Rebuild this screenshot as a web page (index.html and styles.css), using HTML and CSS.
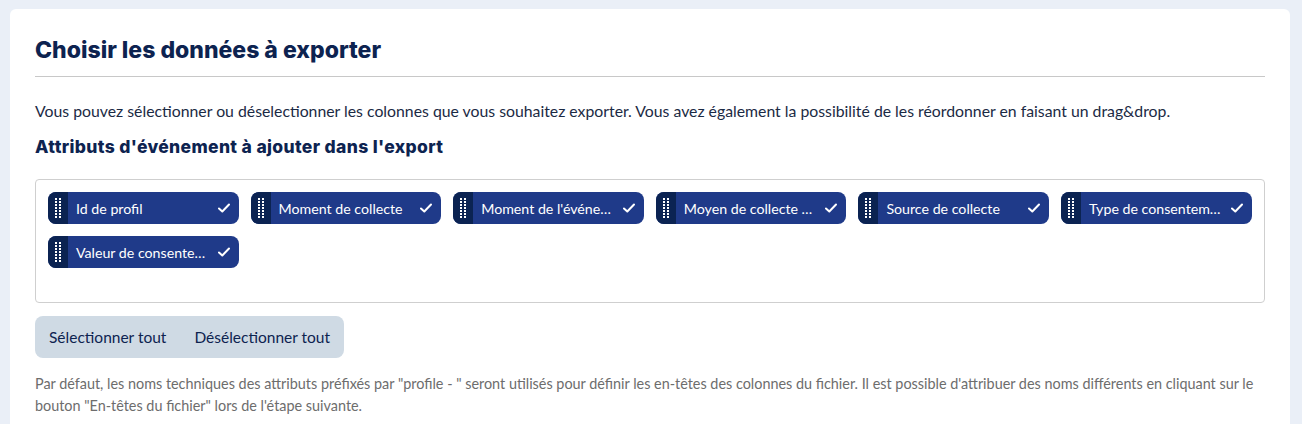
FILE: index.html
```html
<!DOCTYPE html>
<html lang="fr">
<head>
    <meta charset="UTF-8">
    <title>Choisir les données à exporter</title>
    <link rel="stylesheet" href="styles.css">
</head>
<body>
    <section class="card">
        <h2 class="title">Choisir les données à exporter</h2>
        <p class="intro">Vous pouvez sélectionner ou déselectionner les colonnes que vous souhaitez exporter. Vous avez également la possibilité de les réordonner en faisant un drag&amp;drop.</p>
        <h3 class="subtitle">Attributs d'événement à ajouter dans l'export</h3>

        <div class="chips">
            <div class="chip"><span class="grip"><svg viewBox="0 0 6 21" width="6" height="21"><g fill="#fff"><rect x="0" y="0" width="2" height="2"/><rect x="4" y="0" width="2" height="2"/><rect x="0" y="3" width="2" height="2"/><rect x="4" y="3" width="2" height="2"/><rect x="0" y="6" width="2" height="2"/><rect x="4" y="6" width="2" height="2"/><rect x="0" y="9" width="2" height="2"/><rect x="4" y="9" width="2" height="2"/><rect x="0" y="12" width="2" height="2"/><rect x="4" y="12" width="2" height="2"/><rect x="0" y="15" width="2" height="2"/><rect x="4" y="15" width="2" height="2"/><rect x="0" y="18" width="2" height="2"/><rect x="4" y="18" width="2" height="2"/></g></svg></span><span class="label">Id de profil</span><span class="check"><svg viewBox="0 0 12 10" width="12" height="10"><path d="M1 5.5 L4.3 8.5 L11 1.5" fill="none" stroke="#fff" stroke-width="2" stroke-linecap="round" stroke-linejoin="round"/></svg></span></div>
            <div class="chip"><span class="grip"><svg viewBox="0 0 6 21" width="6" height="21"><g fill="#fff"><rect x="0" y="0" width="2" height="2"/><rect x="4" y="0" width="2" height="2"/><rect x="0" y="3" width="2" height="2"/><rect x="4" y="3" width="2" height="2"/><rect x="0" y="6" width="2" height="2"/><rect x="4" y="6" width="2" height="2"/><rect x="0" y="9" width="2" height="2"/><rect x="4" y="9" width="2" height="2"/><rect x="0" y="12" width="2" height="2"/><rect x="4" y="12" width="2" height="2"/><rect x="0" y="15" width="2" height="2"/><rect x="4" y="15" width="2" height="2"/><rect x="0" y="18" width="2" height="2"/><rect x="4" y="18" width="2" height="2"/></g></svg></span><span class="label">Moment de collecte</span><span class="check"><svg viewBox="0 0 12 10" width="12" height="10"><path d="M1 5.5 L4.3 8.5 L11 1.5" fill="none" stroke="#fff" stroke-width="2" stroke-linecap="round" stroke-linejoin="round"/></svg></span></div>
            <div class="chip"><span class="grip"><svg viewBox="0 0 6 21" width="6" height="21"><g fill="#fff"><rect x="0" y="0" width="2" height="2"/><rect x="4" y="0" width="2" height="2"/><rect x="0" y="3" width="2" height="2"/><rect x="4" y="3" width="2" height="2"/><rect x="0" y="6" width="2" height="2"/><rect x="4" y="6" width="2" height="2"/><rect x="0" y="9" width="2" height="2"/><rect x="4" y="9" width="2" height="2"/><rect x="0" y="12" width="2" height="2"/><rect x="4" y="12" width="2" height="2"/><rect x="0" y="15" width="2" height="2"/><rect x="4" y="15" width="2" height="2"/><rect x="0" y="18" width="2" height="2"/><rect x="4" y="18" width="2" height="2"/></g></svg></span><span class="label">Moment de l'événement</span><span class="check"><svg viewBox="0 0 12 10" width="12" height="10"><path d="M1 5.5 L4.3 8.5 L11 1.5" fill="none" stroke="#fff" stroke-width="2" stroke-linecap="round" stroke-linejoin="round"/></svg></span></div>
            <div class="chip"><span class="grip"><svg viewBox="0 0 6 21" width="6" height="21"><g fill="#fff"><rect x="0" y="0" width="2" height="2"/><rect x="4" y="0" width="2" height="2"/><rect x="0" y="3" width="2" height="2"/><rect x="4" y="3" width="2" height="2"/><rect x="0" y="6" width="2" height="2"/><rect x="4" y="6" width="2" height="2"/><rect x="0" y="9" width="2" height="2"/><rect x="4" y="9" width="2" height="2"/><rect x="0" y="12" width="2" height="2"/><rect x="4" y="12" width="2" height="2"/><rect x="0" y="15" width="2" height="2"/><rect x="4" y="15" width="2" height="2"/><rect x="0" y="18" width="2" height="2"/><rect x="4" y="18" width="2" height="2"/></g></svg></span><span class="label">Moyen de collecte du consentement</span><span class="check"><svg viewBox="0 0 12 10" width="12" height="10"><path d="M1 5.5 L4.3 8.5 L11 1.5" fill="none" stroke="#fff" stroke-width="2" stroke-linecap="round" stroke-linejoin="round"/></svg></span></div>
            <div class="chip"><span class="grip"><svg viewBox="0 0 6 21" width="6" height="21"><g fill="#fff"><rect x="0" y="0" width="2" height="2"/><rect x="4" y="0" width="2" height="2"/><rect x="0" y="3" width="2" height="2"/><rect x="4" y="3" width="2" height="2"/><rect x="0" y="6" width="2" height="2"/><rect x="4" y="6" width="2" height="2"/><rect x="0" y="9" width="2" height="2"/><rect x="4" y="9" width="2" height="2"/><rect x="0" y="12" width="2" height="2"/><rect x="4" y="12" width="2" height="2"/><rect x="0" y="15" width="2" height="2"/><rect x="4" y="15" width="2" height="2"/><rect x="0" y="18" width="2" height="2"/><rect x="4" y="18" width="2" height="2"/></g></svg></span><span class="label">Source de collecte</span><span class="check"><svg viewBox="0 0 12 10" width="12" height="10"><path d="M1 5.5 L4.3 8.5 L11 1.5" fill="none" stroke="#fff" stroke-width="2" stroke-linecap="round" stroke-linejoin="round"/></svg></span></div>
            <div class="chip"><span class="grip"><svg viewBox="0 0 6 21" width="6" height="21"><g fill="#fff"><rect x="0" y="0" width="2" height="2"/><rect x="4" y="0" width="2" height="2"/><rect x="0" y="3" width="2" height="2"/><rect x="4" y="3" width="2" height="2"/><rect x="0" y="6" width="2" height="2"/><rect x="4" y="6" width="2" height="2"/><rect x="0" y="9" width="2" height="2"/><rect x="4" y="9" width="2" height="2"/><rect x="0" y="12" width="2" height="2"/><rect x="4" y="12" width="2" height="2"/><rect x="0" y="15" width="2" height="2"/><rect x="4" y="15" width="2" height="2"/><rect x="0" y="18" width="2" height="2"/><rect x="4" y="18" width="2" height="2"/></g></svg></span><span class="label">Type de consentement</span><span class="check"><svg viewBox="0 0 12 10" width="12" height="10"><path d="M1 5.5 L4.3 8.5 L11 1.5" fill="none" stroke="#fff" stroke-width="2" stroke-linecap="round" stroke-linejoin="round"/></svg></span></div>
            <div class="chip"><span class="grip"><svg viewBox="0 0 6 21" width="6" height="21"><g fill="#fff"><rect x="0" y="0" width="2" height="2"/><rect x="4" y="0" width="2" height="2"/><rect x="0" y="3" width="2" height="2"/><rect x="4" y="3" width="2" height="2"/><rect x="0" y="6" width="2" height="2"/><rect x="4" y="6" width="2" height="2"/><rect x="0" y="9" width="2" height="2"/><rect x="4" y="9" width="2" height="2"/><rect x="0" y="12" width="2" height="2"/><rect x="4" y="12" width="2" height="2"/><rect x="0" y="15" width="2" height="2"/><rect x="4" y="15" width="2" height="2"/><rect x="0" y="18" width="2" height="2"/><rect x="4" y="18" width="2" height="2"/></g></svg></span><span class="label">Valeur de consentement</span><span class="check"><svg viewBox="0 0 12 10" width="12" height="10"><path d="M1 5.5 L4.3 8.5 L11 1.5" fill="none" stroke="#fff" stroke-width="2" stroke-linecap="round" stroke-linejoin="round"/></svg></span></div>
        </div>

        <div class="btn-group">
            <button class="btn">Sélectionner tout</button>
            <button class="btn">Désélectionner tout</button>
        </div>

        <p class="note">Par défaut, les noms techniques des attributs préfixés par "profile - " seront utilisés pour définir les en-têtes des colonnes du fichier. Il est possible d'attribuer des noms différents en cliquant sur le bouton "En-têtes du fichier" lors de l'étape suivante.</p>
    </section>
</body>
</html>
```

FILE: styles.css
```css
body {
    margin: 0;
    padding: 9px 12px 0 10px;
    background-color: #eaeff7;
    font-family: "Lato", "Noto Sans", sans-serif;
    color: #1b2a44;
    overflow: hidden;
}

.card {
    background-color: #fff;
    border-radius: 6px 6px 0 0;
    padding: 26px 25px 0;
    min-height: 415px;
    box-sizing: border-box;
}

.title {
    font-family: "Inter", "Noto Sans", sans-serif;
    font-size: 23px;
    line-height: 30px;
    font-weight: 800;
    color: #0d2350;
    margin: 0;
    padding-bottom: 11px;
    border-bottom: 1px solid #c8c8c8;
}

.intro {
    font-size: 15.8px;
    margin: 23px 0 0;
    line-height: 22px;
}

.subtitle {
    font-family: "Inter", "Noto Sans", sans-serif;
    font-size: 17.5px;
    font-weight: 800;
    letter-spacing: 0.35px;
    color: #0d2350;
    margin: 13px 0 0;
    line-height: 24px;
}

.chips {
    margin-top: 20px;
    border: 1px solid #cfcfcf;
    border-radius: 4px;
    height: 124px;
    box-sizing: border-box;
    padding: 12px 12px;
    display: flex;
    flex-wrap: wrap;
    align-content: flex-start;
    gap: 12px;
}

.chip {
    width: 190.6px;
    height: 32px;
    display: flex;
    align-items: center;
    background-color: #1f3a89;
    border-radius: 8px;
    overflow: hidden;
    color: #fff;
    font-size: 14.2px;
}

.grip {
    width: 20px;
    height: 100%;
    flex: none;
    background-color: #0b2352;
    display: flex;
    align-items: center;
    justify-content: center;
}

.grip svg {
    display: block;
}

.label {
    flex: 1;
    padding-left: 8px;
    white-space: nowrap;
    overflow: hidden;
    text-overflow: ellipsis;
}

.check {
    flex: none;
    width: 30px;
    display: flex;
    justify-content: center;
}

.check svg {
    display: block;
}

.btn-group {
    display: inline-flex;
    margin-top: 13px;
    background-color: #cfdae4;
    border-radius: 8px;
}

.btn {
    border: none;
    background: none;
    font-family: "Lato", "Noto Sans", sans-serif;
    font-size: 15.5px;
    color: #0d2350;
    height: 42px;
    padding: 0 14px;
    cursor: pointer;
}

.note {
    font-size: 14.4px;
    color: #6d6d6d;
    line-height: 22px;
    margin: 15px 0 0;
}
```
